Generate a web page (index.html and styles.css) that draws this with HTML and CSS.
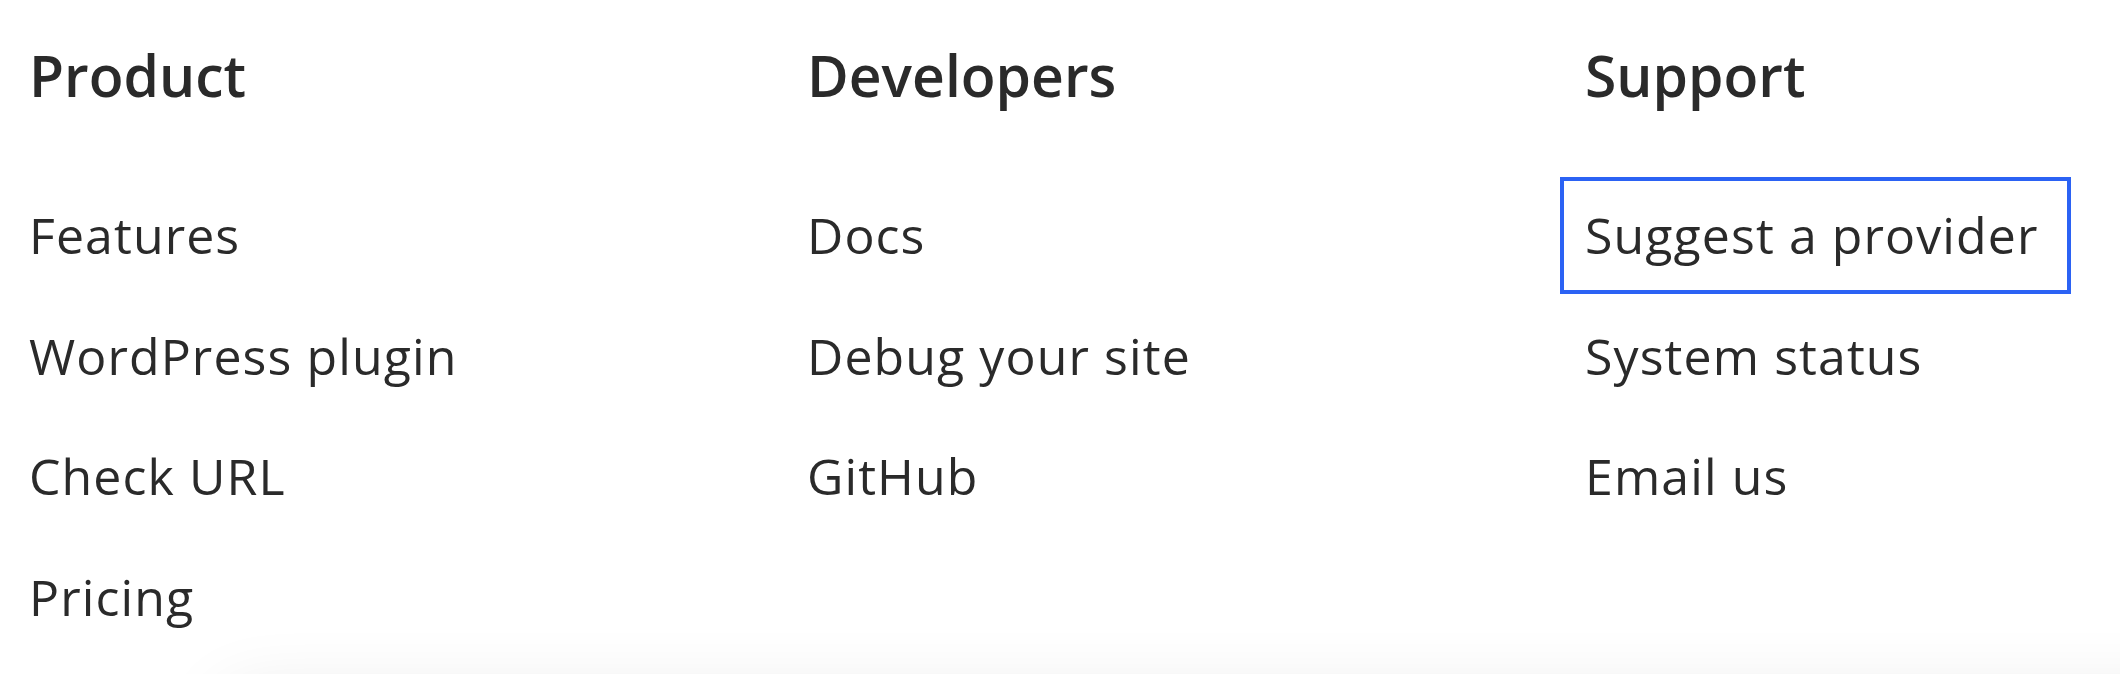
FILE: index.html
```html
<!DOCTYPE html>
<html lang="en">
<head>
	<meta charset="UTF-8">
	<title>Footer links</title>
	<link rel="stylesheet" href="styles.css">
</head>
<body>
<div id="footer">
	<div class="cols">
		<div class="col">
			<h2 class="col-title">Product</h2>
			<ul class="links">
				<li><a href="#">Features</a></li>
				<li><a href="#">WordPress plugin</a></li>
				<li><a href="#">Check URL</a></li>
				<li><a href="#">Pricing</a></li>
			</ul>
		</div>
		<div class="col">
			<h2 class="col-title">Developers</h2>
			<ul class="links">
				<li><a href="#">Docs</a></li>
				<li><a href="#">Debug your site</a></li>
				<li><a href="#">GitHub</a></li>
			</ul>
		</div>
		<div class="col">
			<h2 class="col-title">Support</h2>
			<ul class="links">
				<li><a class="focus" href="#">Suggest a provider</a></li>
				<li><a href="#">System status</a></li>
				<li><a href="#">Email us</a></li>
			</ul>
		</div>
	</div>
	<!-- /.cols -->
	<div class="card"></div>
</div>
</body>
</html>
```

FILE: styles.css
```css
* {
	padding: 0;
	margin: 0;
	box-sizing: border-box;
}

body {
	font-family: "Open Sans", Lato, sans-serif;
	color: #2a2a2a;
	background-color: #fff;
	overflow: hidden;
}

li {
	list-style: none;
}

#footer {
	padding: 39px 32px 0 29px;
}

.cols {
	display: grid;
	grid-template-columns: repeat(3, 1fr);
	column-gap: 275px;
}

.col-title {
	font-size: 57px;
	font-weight: 600;
	line-height: 72px;
	margin-bottom: 66px;
}

.links {
	display: flex;
	flex-direction: column;
	gap: 3.5px;
}

.links a {
	display: inline-block;
	font-size: 50px;
	letter-spacing: 1.1px;
	line-height: 73px;
	padding: 18px 29px 18px 21px;
	margin-left: -25px;
	border: 4px solid transparent;
	color: #2a2a2a;
	text-decoration: none;
	white-space: nowrap;
}

.links a.focus {
	border-color: #2b62f4;
}

.card {
	margin: 35px -200px 0 190px;
	height: 300px;
	border-radius: 30px;
	background-color: #fff;
	box-shadow: 0 0 70px rgba(0, 0, 0, .09);
}
```
